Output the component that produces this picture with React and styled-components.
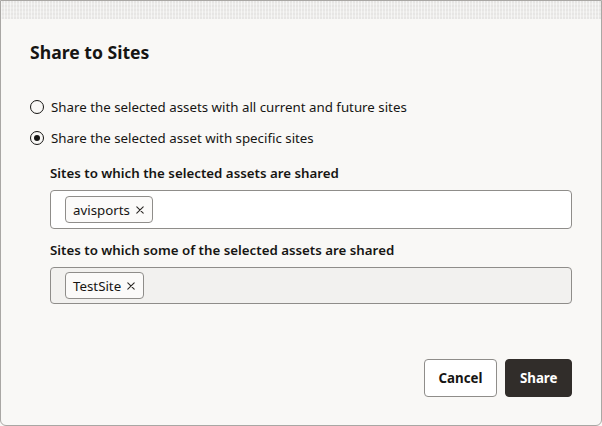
import React, { useState } from 'react';
import styled, { createGlobalStyle } from 'styled-components';

const GlobalStyle = createGlobalStyle`
  html, body {
    margin: 0;
    padding: 0;
    background: #f9f8f6;
  }

  body {
    font-family: 'Noto Sans', 'Liberation Sans', sans-serif;
    color: #161513;
  }
`;

const Dialog = styled.div`
  box-sizing: border-box;
  width: 602px;
  height: 426px;
  display: flex;
  flex-direction: column;
  background: #f9f8f6;
  border: 1px solid #a9a7a4;
  border-radius: 0 0 6px 6px;
  overflow: hidden;
`;

const DragStrip = styled.div`
  height: 18px;
  flex-shrink: 0;
  background-color: #ecebe9;
  background-image:
    repeating-linear-gradient(90deg, rgba(255, 255, 255, 0.55) 0 1px, transparent 1px 3px),
    repeating-linear-gradient(0deg, rgba(0, 0, 0, 0.025) 0 2px, transparent 2px 4px);
`;

const Body = styled.div`
  flex: 1;
  display: flex;
  flex-direction: column;
  padding: 21px 29px 0 29px;
`;

const Title = styled.h1`
  margin: 0 0 32px;
  font-size: 17.6px;
  font-weight: 700;
  line-height: 24px;
`;

const RadioGroup = styled.div`
  display: flex;
  flex-direction: column;
  gap: 9px;
`;

const RadioRow = styled.label`
  display: flex;
  align-items: center;
  gap: 7px;
  font-size: 13.3px;
  line-height: 22px;
  cursor: pointer;
`;

const RadioDot = styled.span`
  box-sizing: border-box;
  width: 14px;
  height: 14px;
  border-radius: 50%;
  border: 1.5px solid #161513;
  display: flex;
  align-items: center;
  justify-content: center;

  &::after {
    content: '';
    width: 6px;
    height: 6px;
    border-radius: 50%;
    background: #161513;
    display: ${p => (p.$checked ? 'block' : 'none')};
  }
`;

const Fields = styled.div`
  display: flex;
  flex-direction: column;
  padding: 15px 0 0 20px;
`;

const FieldLabel = styled.div`
  font-size: 13.3px;
  font-weight: 600;
  line-height: 18px;
  margin-bottom: 8px;
`;

const TagBox = styled.div`
  box-sizing: border-box;
  height: ${p => (p.$readonly ? '37px' : '39px')};
  display: flex;
  align-items: center;
  padding: 0 14px;
  background: ${p => (p.$readonly ? '#f2f1ef' : '#ffffff')};
  border: 1px solid #8f8d8a;
  border-radius: 4px;
  margin-bottom: ${p => (p.$gap ? '12px' : '0')};
`;

const Chip = styled.span`
  box-sizing: border-box;
  height: 27px;
  display: inline-flex;
  align-items: center;
  gap: 6px;
  padding: 0 8px 0 7px;
  font-size: 13.3px;
  background: #fbfaf9;
  border: 1px solid #8f8d8a;
  border-radius: 4px;
`;

const CloseIcon = styled.svg`
  width: 8px;
  height: 8px;
  flex-shrink: 0;
  stroke: #2b2825;
  stroke-width: 1.1;
  stroke-linecap: round;
`;

const Footer = styled.div`
  margin-top: auto;
  display: flex;
  justify-content: flex-end;
  gap: 8px;
  padding: 0 29px 28px;
`;

const Button = styled.button`
  box-sizing: border-box;
  height: 38px;
  padding: 0 ${p => (p.$primary ? '13.5px' : '14px')};
  font-family: inherit;
  font-size: 13.3px;
  font-weight: 700;
  border-radius: 4px;
  cursor: pointer;
  border: 1px solid ${p => (p.$primary ? '#312d2a' : '#8f8d8a')};
  background: ${p => (p.$primary ? '#312d2a' : '#ffffff')};
  color: ${p => (p.$primary ? '#ffffff' : '#161513')};
`;

const Tag = ({ children }) => (
  <Chip>
    {children}
    <CloseIcon viewBox="0 0 8 8" fill="none">
      <path d="M0.8 0.8L7.2 7.2M7.2 0.8L0.8 7.2" />
    </CloseIcon>
  </Chip>
);

const App = () => {
  const [mode, setMode] = useState('specific');

  return (
    <>
      <GlobalStyle />
      <Dialog>
        <DragStrip />
        <Body>
          <Title>Share to Sites</Title>
          <RadioGroup>
            <RadioRow onClick={() => setMode('all')}>
              <RadioDot $checked={mode === 'all'} />
              Share the selected assets with all current and future sites
            </RadioRow>
            <RadioRow onClick={() => setMode('specific')}>
              <RadioDot $checked={mode === 'specific'} />
              Share the selected asset with specific sites
            </RadioRow>
          </RadioGroup>
          <Fields>
            <FieldLabel>Sites to which the selected assets are shared</FieldLabel>
            <TagBox $gap>
              <Tag>avisports</Tag>
            </TagBox>
            <FieldLabel>Sites to which some of the selected assets are shared</FieldLabel>
            <TagBox $readonly>
              <Tag>TestSite</Tag>
            </TagBox>
          </Fields>
        </Body>
        <Footer>
          <Button>Cancel</Button>
          <Button $primary>Share</Button>
        </Footer>
      </Dialog>
    </>
  );
};

export default App;
